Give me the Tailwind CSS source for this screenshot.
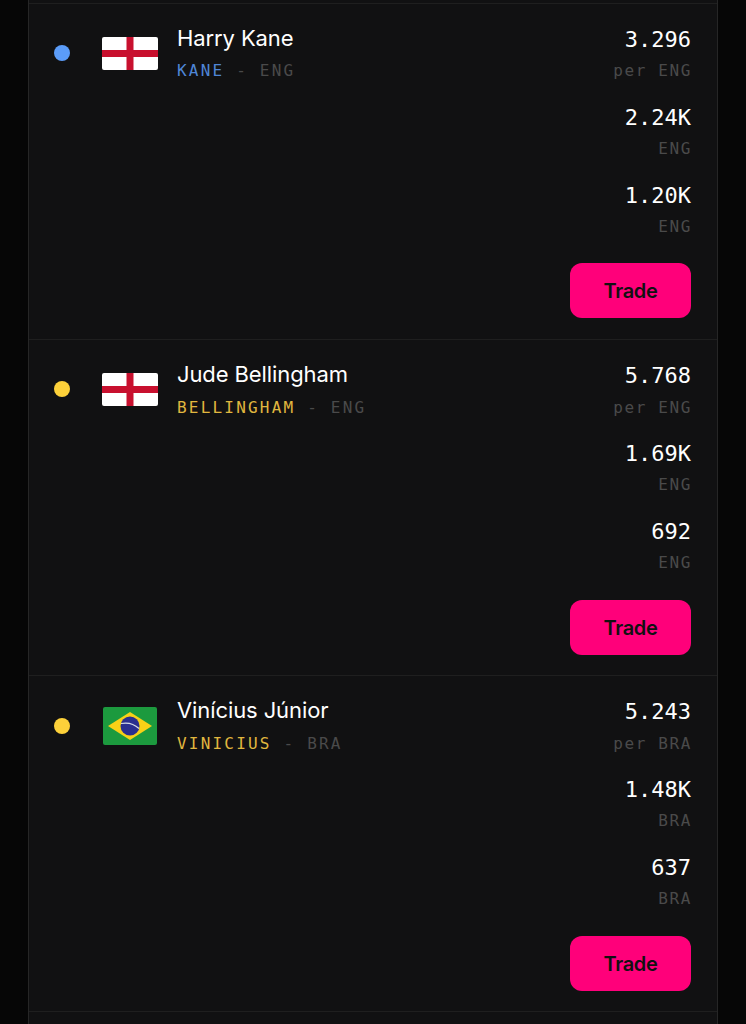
<!DOCTYPE html>
<html lang="en">
<head>
    <meta charset="UTF-8">
    <meta name="viewport" content="width=device-width, initial-scale=1.0">
    <title>Players</title>
    <script src="https://cdn.jsdelivr.net/npm/@tailwindcss/browser@4"></script>
</head>
<body class="bg-[#060606] h-[1024px] overflow-hidden font-['Inter',sans-serif]">
    <div class="mx-[28px] w-[690px] h-[1024px] border-x border-[#262626] bg-[#111112] pt-[3px]">

        <!-- Harry Kane -->
        <div class="h-[336px] border-t border-[#1f1f1f] pl-[25px] pr-[26px] pt-[17px] flex justify-between">
            <div class="flex items-start">
                <div class="w-[16px] h-[16px] rounded-full bg-[#5b9cf8] mt-[24px]"></div>
                <svg class="ml-[32px] mt-[16px] rounded-[2px]" width="56" height="33" viewBox="0 0 56 33">
                    <rect width="56" height="33" fill="#ffffff"/>
                    <rect x="24.5" width="7" height="33" fill="#c8102e"/>
                    <rect y="13" width="56" height="7" fill="#c8102e"/>
                </svg>
                <div class="ml-[19px]">
                    <div class="text-[22px] leading-[35px] text-white tracking-[-0.1px]">Harry Kane</div>
                    <div class="font-['DejaVu_Sans_Mono',monospace] text-[16px] leading-[26px] mt-[2px] tracking-[2.2px]"><span class="text-[#4f86d6]">KANE</span><span class="text-[#4a4a4a]"> - ENG</span></div>
                </div>
            </div>
            <div class="flex flex-col items-end font-['DejaVu_Sans_Mono',monospace]">
                <div class="text-[22px] leading-[38px] text-white">3.296</div>
                <div class="text-[16px] leading-[26px] mt-[-1px] mb-[15px] text-[#4a4a4a] tracking-[1.6px] mr-[-1px]">per ENG</div>
                <div class="text-[22px] leading-[38px] text-white">2.24K</div>
                <div class="text-[16px] leading-[26px] mt-[-1px] mb-[15px] text-[#4a4a4a] tracking-[1.6px] mr-[-1px]">ENG</div>
                <div class="text-[22px] leading-[38px] text-white">1.20K</div>
                <div class="text-[16px] leading-[26px] mt-[-1px] mb-[15px] text-[#4a4a4a] tracking-[1.6px] mr-[-1px]">ENG</div>
                <button class="w-[121px] h-[55px] mt-[8px] rounded-[12px] bg-[#ff007a] text-[#111112] text-[20px] font-['Inter',sans-serif] font-semibold tracking-[-0.3px]">Trade</button>
            </div>
        </div>

        <!-- Jude Bellingham -->
        <div class="h-[336px] border-t border-[#1f1f1f] pl-[25px] pr-[26px] pt-[17px] flex justify-between">
            <div class="flex items-start">
                <div class="w-[16px] h-[16px] rounded-full bg-[#fdd13a] mt-[24px]"></div>
                <svg class="ml-[32px] mt-[16px] rounded-[2px]" width="56" height="33" viewBox="0 0 56 33">
                    <rect width="56" height="33" fill="#ffffff"/>
                    <rect x="24.5" width="7" height="33" fill="#c8102e"/>
                    <rect y="13" width="56" height="7" fill="#c8102e"/>
                </svg>
                <div class="ml-[19px]">
                    <div class="text-[22px] leading-[35px] text-white tracking-[-0.1px]">Jude Bellingham</div>
                    <div class="font-['DejaVu_Sans_Mono',monospace] text-[16px] leading-[26px] mt-[3px] tracking-[2.2px]"><span class="text-[#e0b73f]">BELLINGHAM</span><span class="text-[#4a4a4a]"> - ENG</span></div>
                </div>
            </div>
            <div class="flex flex-col items-end font-['DejaVu_Sans_Mono',monospace]">
                <div class="text-[22px] leading-[38px] text-white">5.768</div>
                <div class="text-[16px] leading-[26px] mb-[14px] text-[#4a4a4a] tracking-[1.6px] mr-[-1px]">per ENG</div>
                <div class="text-[22px] leading-[38px] text-white">1.69K</div>
                <div class="text-[16px] leading-[26px] mt-[-1px] mb-[15px] text-[#4a4a4a] tracking-[1.6px] mr-[-1px]">ENG</div>
                <div class="text-[22px] leading-[38px] text-white">692</div>
                <div class="text-[16px] leading-[26px] mt-[-1px] mb-[15px] text-[#4a4a4a] tracking-[1.6px] mr-[-1px]">ENG</div>
                <button class="w-[121px] h-[55px] mt-[9px] rounded-[12px] bg-[#ff007a] text-[#111112] text-[20px] font-['Inter',sans-serif] font-semibold tracking-[-0.3px]">Trade</button>
            </div>
        </div>

        <!-- Vinicius Junior -->
        <div class="h-[337px] border-y border-[#1f1f1f] pl-[25px] pr-[26px] pt-[17px] flex justify-between">
            <div class="flex items-start">
                <div class="w-[16px] h-[16px] rounded-full bg-[#fdd13a] mt-[25px]"></div>
                <svg class="ml-[33px] mt-[14px] rounded-[2px]" width="54" height="38" viewBox="0 0 54 38">
                    <rect width="54" height="38" fill="#1c9a3e"/>
                    <polygon points="27,5 49,19 27,33 5,19" fill="#f7d117"/>
                    <circle cx="27" cy="19" r="9.5" fill="#2b2f8f"/>
                    <path d="M18 16.5c6-1.2 13 .3 18 5" fill="none" stroke="#d8dce8" stroke-width="1.2"/>
                </svg>
                <div class="ml-[20px]">
                    <div class="text-[22px] leading-[35px] text-white tracking-[-0.1px]">Vinícius Júnior</div>
                    <div class="font-['DejaVu_Sans_Mono',monospace] text-[16px] leading-[26px] mt-[3px] tracking-[2.2px]"><span class="text-[#e0b73f]">VINICIUS</span><span class="text-[#4a4a4a]"> - BRA</span></div>
                </div>
            </div>
            <div class="flex flex-col items-end font-['DejaVu_Sans_Mono',monospace]">
                <div class="text-[22px] leading-[38px] text-white">5.243</div>
                <div class="text-[16px] leading-[26px] mb-[14px] text-[#4a4a4a] tracking-[1.6px] mr-[-1px]">per BRA</div>
                <div class="text-[22px] leading-[38px] text-white">1.48K</div>
                <div class="text-[16px] leading-[26px] mt-[-1px] mb-[15px] text-[#4a4a4a] tracking-[1.6px] mr-[-1px]">BRA</div>
                <div class="text-[22px] leading-[38px] text-white">637</div>
                <div class="text-[16px] leading-[26px] mt-[-1px] mb-[15px] text-[#4a4a4a] tracking-[1.6px] mr-[-1px]">BRA</div>
                <button class="w-[121px] h-[55px] mt-[9px] rounded-[12px] bg-[#ff007a] text-[#111112] text-[20px] font-['Inter',sans-serif] font-semibold tracking-[-0.3px]">Trade</button>
            </div>
        </div>

    </div>
</body>
</html>
